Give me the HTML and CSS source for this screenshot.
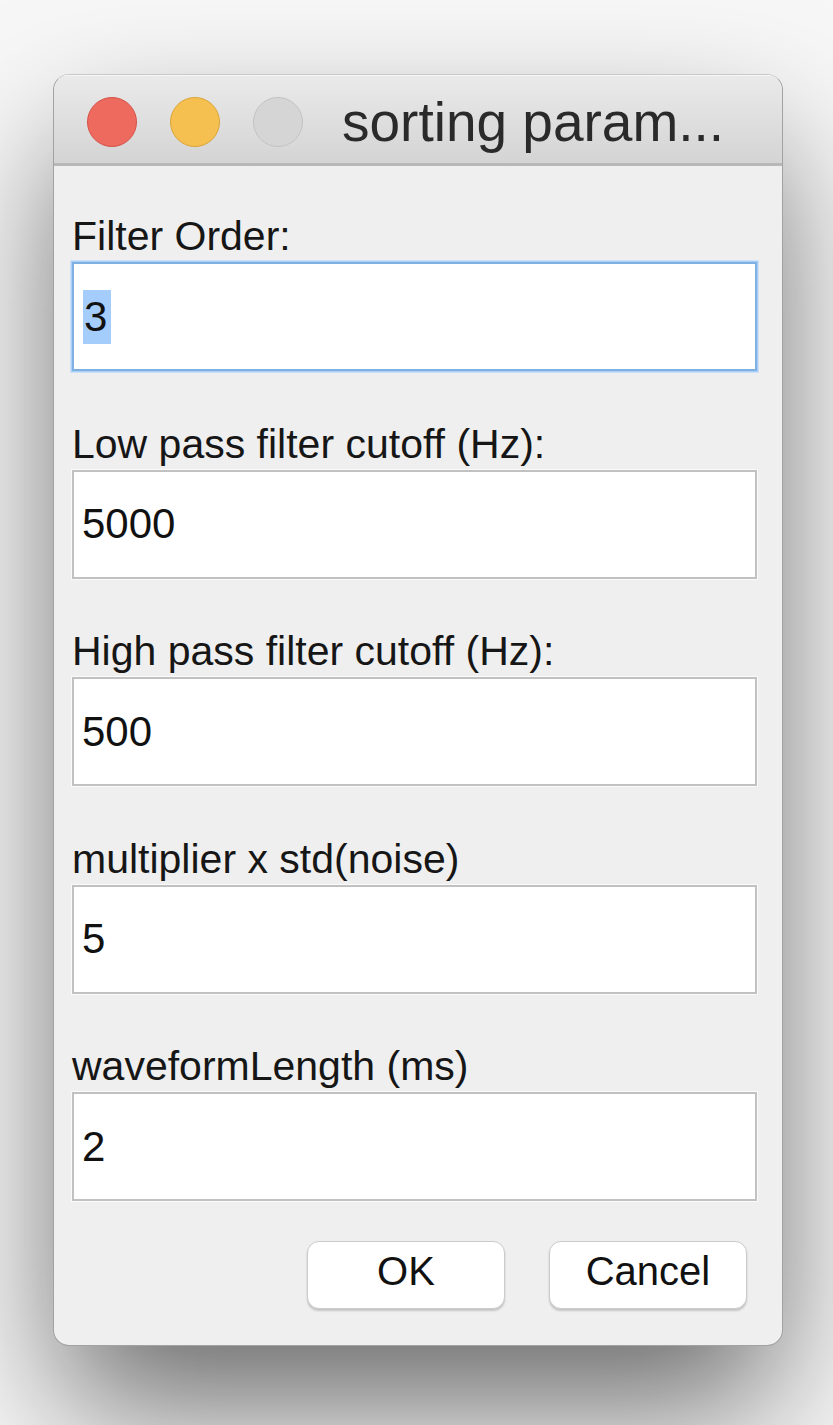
FILE: index.html
```html
<!DOCTYPE html>
<html>
<head>
<meta charset="utf-8">
<title>sorting parameters</title>
<link rel="stylesheet" href="styles.css">
</head>
<body>
<div class="window">
  <div class="titlebar">
    <span class="light red"></span>
    <span class="light yellow"></span>
    <span class="light gray"></span>
    <span class="title">sorting param...</span>
  </div>
  <div class="content">
    <div class="group">
      <div class="label">Filter Order:</div>
      <div class="field focused"><span class="selected">3</span></div>
    </div>
    <div class="group">
      <div class="label">Low pass filter cutoff (Hz):</div>
      <div class="field">5000</div>
    </div>
    <div class="group">
      <div class="label">High pass filter cutoff (Hz):</div>
      <div class="field">500</div>
    </div>
    <div class="group">
      <div class="label">multiplier x std(noise)</div>
      <div class="field">5</div>
    </div>
    <div class="group">
      <div class="label">waveformLength (ms)</div>
      <div class="field">2</div>
    </div>
    <div class="buttons">
      <div class="button">OK</div>
      <div class="button">Cancel</div>
    </div>
  </div>
</div>
</body>
</html>
```

FILE: styles.css
```css
html, body {
  margin: 0;
  padding: 0;
}
body {
  background: #f7f7f7;
  width: 833px;
  height: 1425px;
  overflow: hidden;
  padding: 74px 0 0 53px;
  box-sizing: border-box;
  font-family: "Liberation Sans", Arial, sans-serif;
}
.window {
  width: 730px;
  height: 1272px;
  box-sizing: border-box;
  border: 1px solid rgba(0, 0, 0, 0.32);
  border-top-color: #c9c9c9;
  border-radius: 16px;
  background: #efefef;
  box-shadow: 0 68px 140px -8px rgba(0, 0, 0, 0.58);
  overflow: hidden;
  display: flex;
  flex-direction: column;
}
.titlebar {
  height: 91px;
  box-sizing: border-box;
  padding: 5px 0 0 33px;
  display: flex;
  align-items: center;
  background: linear-gradient(#eaeaea, #d4d4d4);
  border-bottom: 3px solid #b8b8b8;
  box-shadow: inset 0 1px 0 #f6f6f6;
  flex: none;
}
.light {
  width: 50px;
  height: 50px;
  box-sizing: border-box;
  border-radius: 50%;
  margin-right: 33px;
  flex: none;
}
.red {
  background: #ee6a5f;
  border: 1.5px solid #d45249;
}
.yellow {
  background: #f5c04f;
  border: 1.5px solid #d9a53a;
}
.gray {
  background: #d5d5d5;
  border: 1.5px solid #c2c2c2;
  margin-right: 39px;
}
.title {
  font-size: 55px;
  color: #2a2a2a;
  white-space: nowrap;
}
.content {
  flex: 1;
  padding: 46px 25px 0 18px;
  display: flex;
  flex-direction: column;
  gap: 48.5px;
}
.group {
  display: flex;
  flex-direction: column;
}
.label {
  font-size: 41px;
  line-height: 48px;
  color: #161616;
  margin-bottom: 2px;
  white-space: nowrap;
}
.field {
  height: 109px;
  box-sizing: border-box;
  background: #fff;
  border: 2px solid #c1c1c1;
  box-shadow: 0 0 0 1px #fbfbfb;
  display: flex;
  align-items: center;
  padding-left: 8px;
  font-size: 42px;
  color: #111;
}
.field.focused {
  border-color: #7fb0e2;
  box-shadow: 0 0 0 1.5px #a9d0fa;
}
.selected {
  display: inline-block;
  background: #a5cdfb;
  line-height: 54px;
  padding: 0 4px 0 1px;
  margin-left: 1px;
}
.buttons {
  display: flex;
  justify-content: flex-end;
  gap: 44px;
  margin-top: -9px;
  padding-right: 10px;
}
.button {
  width: 198px;
  height: 68px;
  box-sizing: border-box;
  background: #fff;
  border: 1px solid #cbcbcb;
  border-radius: 12px;
  box-shadow: 0 2px 2px rgba(0, 0, 0, 0.18);
  display: flex;
  align-items: center;
  justify-content: center;
  padding-bottom: 7px;
  font-size: 40px;
  color: #111;
}
```
